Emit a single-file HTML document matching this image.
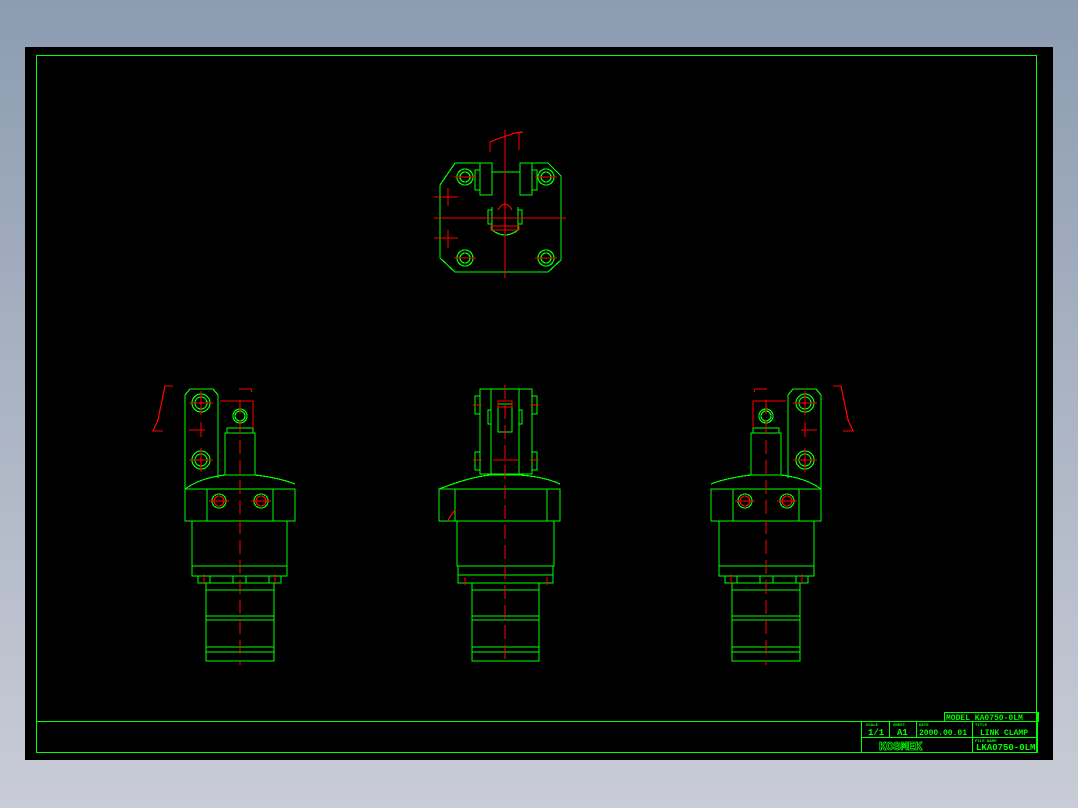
<!DOCTYPE html>
<html><head><style>
html,body{margin:0;padding:0;width:1078px;height:808px;overflow:hidden;background:linear-gradient(#8c9cb1,#c9ccd6);}
svg{position:absolute;left:0;top:0}
text{font-family:"Liberation Mono",monospace;fill:#0f0;font-weight:bold}
</style></head><body>
<svg width="1078" height="808" viewBox="0 0 1078 808" shape-rendering="crispEdges">
<rect x="25" y="47" width="1028" height="713" fill="#000"/>
<g fill="none" stroke="#0f0" stroke-width="1">
<rect x="36.5" y="55.5" width="1000" height="697"/>
<line x1="36" y1="721.5" x2="1037" y2="721.5"/>
<rect x="861.5" y="721.5" width="176" height="31"/>
<line x1="861" y1="737.5" x2="1037" y2="737.5"/>
<line x1="889.5" y1="721" x2="889.5" y2="737"/>
<line x1="916.5" y1="721" x2="916.5" y2="737"/>
<line x1="972.5" y1="721" x2="972.5" y2="752"/>
<rect x="944.5" y="712.5" width="94" height="9"/>
<line x1="1037.5" y1="712" x2="1037.5" y2="752"/>
</g>
<text x="946" y="720" font-size="8">MODEL KA0750-0LM</text>
<text x="866" y="726" font-size="4">SCALE</text>
<text x="893" y="726" font-size="4">SHEET</text>
<text x="919" y="726" font-size="4">DATE</text>
<text x="975" y="726" font-size="4">TITLE</text>
<text x="868" y="735" font-size="9">1/1</text>
<text x="897" y="735" font-size="9">A1</text>
<text x="919" y="735" font-size="8">2000.00.01</text>
<text x="980" y="735" font-size="8">LINK CLAMP</text>
<text x="975" y="742" font-size="4">FILE NAME</text>
<text x="976" y="750" font-size="9">LKA0750-0LM</text>
<text x="879" y="750" font-size="12" style="fill:none;stroke:#0f0;stroke-width:0.8">KOSMEK</text>

<g fill="none" stroke="#0f0" stroke-width="1.2">
<polygon points="455,163 492,163 492,172 520,172 520,163 548,163 561,176 561,260 548,272 455,272 440,258 440,185"/>
<circle cx="465" cy="177" r="8"/><circle cx="465" cy="177" r="5"/>
<circle cx="546" cy="177" r="8"/><circle cx="546" cy="177" r="5"/>
<circle cx="465" cy="258" r="8"/><circle cx="465" cy="258" r="5"/>
<circle cx="546" cy="258" r="8"/><circle cx="546" cy="258" r="5"/>
<rect x="480" y="163" width="12" height="32"/><rect x="520" y="163" width="12" height="32"/>
<rect x="475" y="170" width="5" height="20"/><rect x="532" y="170" width="5" height="20"/>
<path d="M492,207 L492,230 Q505,240 518,230 L518,207"/>
<rect x="488" y="210" width="4" height="14"/><rect x="518" y="210" width="4" height="14"/>
</g>
<g stroke="#f00" fill="none" stroke-width="1.2">
<line x1="505" y1="130" x2="505" y2="278"/>
<line x1="434" y1="218" x2="566" y2="218"/>
<line x1="454" y1="177" x2="476" y2="177"/><line x1="535" y1="177" x2="557" y2="177"/>
<line x1="454" y1="258" x2="476" y2="258"/><line x1="535" y1="258" x2="557" y2="258"/>
<line x1="434" y1="197" x2="458" y2="197"/><line x1="448" y1="188" x2="448" y2="206"/>
<line x1="434" y1="238" x2="458" y2="238"/><line x1="448" y1="230" x2="448" y2="248"/>
<path d="M490,142 L500,138 L515,133 L523,132 M490,142 L490,152 M519,133 L519,150"/>
<path d="M498,210 Q505,198 512,210"/>
<rect x="491" y="226" width="28" height="4"/>
</g>

<g id="side">
<g fill="none" stroke="#0f0" stroke-width="1.2">
<path d="M185,395 L190,389 L213,389 L218,395 L218,478"/>
<line x1="185" y1="395" x2="185" y2="489"/>
<circle cx="201" cy="403" r="9"/><circle cx="201" cy="403" r="6"/>
<circle cx="201" cy="460" r="9"/><circle cx="201" cy="460" r="6"/>
<circle cx="240" cy="416" r="7"/><circle cx="240" cy="416" r="5"/>
<rect x="225" y="433" width="30" height="42"/>
<path d="M227,433 L227,428 L253,428 L253,433"/>
<path d="M185,489 Q200,478 225,475 L255,475 Q280,478 295,484"/>
<rect x="185" y="489" width="110" height="32"/>
<line x1="207" y1="489" x2="207" y2="521"/><line x1="273" y1="489" x2="273" y2="521"/>
<circle cx="219" cy="501" r="7"/><circle cx="261" cy="501" r="7"/>
<rect x="192" y="521" width="95" height="45"/>
<rect x="192" y="566" width="95" height="10"/>
<rect x="198" y="576" width="12" height="7"/><rect x="233" y="576" width="13" height="7"/><rect x="269" y="576" width="12" height="7"/>
<rect x="206" y="583" width="68" height="78"/>
<line x1="206" y1="590" x2="274" y2="590"/>
<line x1="206" y1="616" x2="274" y2="616"/><line x1="206" y1="620" x2="274" y2="620"/>
<line x1="206" y1="647" x2="274" y2="647"/><line x1="206" y1="652" x2="274" y2="652"/>
</g>
<g fill="none" stroke="#f00" stroke-width="1.2">
<line x1="240" y1="400" x2="240" y2="665" stroke-dasharray="14,6"/>
<line x1="189" y1="403" x2="213" y2="403"/><line x1="201" y1="391" x2="201" y2="415"/>
<line x1="189" y1="460" x2="213" y2="460"/><line x1="201" y1="448" x2="201" y2="472"/>
<line x1="189" y1="430" x2="205" y2="430"/><line x1="201" y1="422" x2="201" y2="437"/>
<path d="M220,401 L253,401 L253,428"/>
<circle cx="219" cy="501" r="5"/><circle cx="261" cy="501" r="5"/>
<line x1="209" y1="501" x2="229" y2="501"/><line x1="251" y1="501" x2="271" y2="501"/>
<path d="M165,386 L173,386 M165,386 L160,410 L158,420 L153,431 L163,431"/>
<path d="M239,389 L251,389 L252,392"/>
<line x1="204" y1="574" x2="204" y2="584"/><line x1="275" y1="574" x2="275" y2="584"/>
</g>
</g>
<use href="#side" transform="translate(1006,0) scale(-1,1)"/>

<g fill="none" stroke="#0f0" stroke-width="1.2">
<rect x="480" y="389" width="52" height="85"/>
<line x1="491" y1="389" x2="491" y2="474"/><line x1="519" y1="389" x2="519" y2="474"/>
<rect x="498" y="404" width="14" height="28"/>
<rect x="475" y="396" width="5" height="18"/><rect x="532" y="396" width="5" height="18"/>
<rect x="475" y="452" width="5" height="18"/><rect x="532" y="452" width="5" height="18"/>
<rect x="488" y="410" width="3" height="14"/><rect x="519" y="410" width="3" height="14"/>
<path d="M439,489 Q470,477 490,475 L520,475 Q545,477 560,484"/>
<rect x="439" y="489" width="121" height="32"/>
<line x1="455" y1="489" x2="455" y2="521"/><line x1="547" y1="489" x2="547" y2="521"/>
<rect x="457" y="521" width="97" height="45"/>
<rect x="458" y="566" width="95" height="17"/>
<line x1="458" y1="575" x2="553" y2="575"/>
<rect x="472" y="583" width="67" height="78"/>
<line x1="472" y1="590" x2="539" y2="590"/>
<line x1="472" y1="616" x2="539" y2="616"/><line x1="472" y1="620" x2="539" y2="620"/>
<line x1="472" y1="647" x2="539" y2="647"/><line x1="472" y1="652" x2="539" y2="652"/>
</g>
<g fill="none" stroke="#f00" stroke-width="1.2">
<line x1="505" y1="385" x2="505" y2="665" stroke-dasharray="14,6"/>
<line x1="493" y1="460" x2="518" y2="460"/>
<line x1="473" y1="405" x2="482" y2="405"/><line x1="530" y1="405" x2="539" y2="405"/>
<line x1="473" y1="460" x2="482" y2="460"/><line x1="530" y1="460" x2="539" y2="460"/>
<rect x="498" y="401" width="14" height="6"/>
<line x1="465" y1="577" x2="465" y2="585"/><line x1="547" y1="577" x2="547" y2="585"/>
<line x1="448" y1="520" x2="455" y2="510"/>
</g>
</svg>
</body></html>
